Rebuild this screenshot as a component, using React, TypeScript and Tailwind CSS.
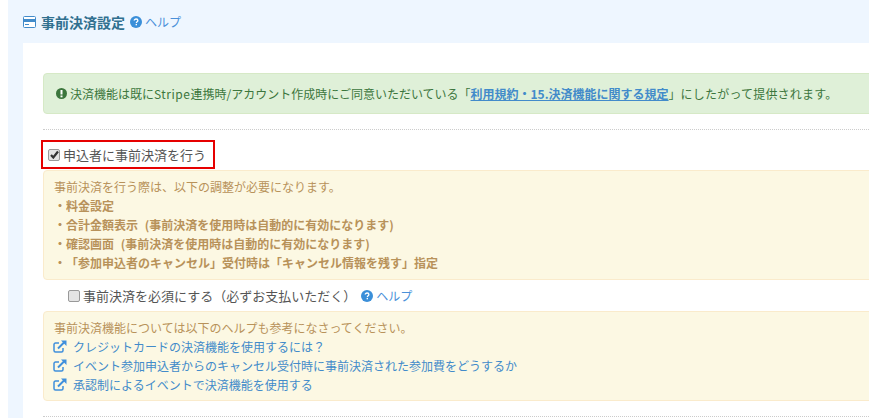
const font = "font-['Noto_Sans_CJK_JP','Noto_Sans_CJK_SC',sans-serif] [text-spacing-trim:space-all]";

function Help() {
  return (
    <span className="flex items-center gap-[3px] text-[12px] leading-[16px] text-[#428bca]">
      <svg width="12" height="12" viewBox="0 0 12 12" className="shrink-0">
        <circle cx="6" cy="6" r="6" fill="#3b8fd9" />
        <path d="M4.200 4.600c0-1 .8-1.600 1.900-1.600s1.800.6 1.800 1.500c0 1.300-1.500 1.200-1.500 2.400" fill="none" stroke="#fff" strokeWidth="1.300" />
        <rect x="5.600" y="7.900" width="1.400" height="1.400" fill="#fff" />
      </svg>
      <span className="text-[#4a90d9]">ヘルプ</span>
    </span>
  );
}

function Ext() {
  return (
    <svg width="14" height="13" viewBox="0 0 14 13" className="shrink-0" fill="none" stroke="#3f8fdc">
      <path d="M10 8v2.500a1.500 1.500 0 0 1-1.500 1.500H2.500A1.500 1.500 0 0 1 1 10.500V4.500A1.500 1.500 0 0 1 2.500 3H6" strokeWidth="1.500" />
      <path d="M5 8.500 11 2.500" strokeWidth="2" />
      <path d="M8 0.500h5.500v5.500z" fill="#3f8fdc" stroke="none" />
    </svg>
  );
}

function Link({ children }: { children: string }) {
  return (
    <div className="flex items-center gap-[6px] -ml-px h-[19px] text-[12px] text-[#428bca]">
      <Ext />
      <span>{children}</span>
    </div>
  );
}

function Box({ checked, size }: { checked?: boolean; size: string }) {
  return (
    <span className={`${size} rounded-[2px] border border-[#999999] bg-[#e4e4e4] flex items-center justify-center shrink-0`}>
      {checked && (
        <svg width="9" height="9" viewBox="0 0 9 9">
          <path d="M1 5l2.300 2.500L8 1.500" fill="none" stroke="#333" strokeWidth="2.200" />
        </svg>
      )}
    </span>
  );
}

export default function App() {
  return (
    <div className={`${font} w-[869px] h-[418px] overflow-hidden bg-white pl-2`}>
      <div className="h-[418px] bg-[#eef6ff] pl-[15px]">
        <div className="h-[43px] flex items-center pt-[1px]">
          <svg width="13" height="12" viewBox="0 0 13 12" className="mr-[5px] shrink-0">
            <rect x="0.500" y="0.500" width="12" height="11" rx="1" fill="#fff" stroke="#428bca" />
            <rect x="0" y="3" width="13" height="3" fill="#428bca" />
            <rect x="2" y="8" width="4" height="1" fill="#428bca" />
          </svg>
          <span className="text-[14px] font-bold text-[#31708f] mr-[5px]">事前決済設定</span>
          <Help />
        </div>
        <div className="h-[375px] bg-white pl-5 pt-[30px]">
          <div className="w-[900px] h-[41px] flex items-center gap-[3px] pl-[12px] bg-[#dff0d8] border border-[#d6e9c6] rounded-l-[4px] text-[12px] text-[#3c763d]">
            <svg width="11" height="11" viewBox="0 0 11 11" className="shrink-0">
              <circle cx="5.500" cy="5.500" r="5.500" fill="#3c763d" />
              <rect x="4.500" y="2" width="2" height="4.500" fill="#fff" />
              <rect x="4.500" y="7.500" width="2" height="1.800" fill="#fff" />
            </svg>
            <span>
              決済機能は既に<span className="tracking-[0.5px]">Stripe</span>連携時/アカウント作成時にご同意いただいている「
              <span className="font-bold text-[#428bca] underline">利用規約・15.決済機能に関する規定</span>
              」<span className="tracking-[0.2px]">にしたがって提供されます。</span>
            </span>
          </div>
          <div className="mt-[15px] h-0 border-t border-dotted border-[#cccccc]" />
          <div className="-ml-[2px] mt-[10px] w-[174px] h-[29px] border-2 border-[#e60000] flex items-center gap-[3px] pl-[5px] text-[13px] text-[#555555]">
            <Box checked size="w-[12px] h-[12px]" />
            <span>申込者に事前決済を行う</span>
          </div>
          <div className="mt-[1px] w-[900px] h-[110px] bg-[#fcf8e3] border border-[#faebcc] rounded-l-[4px] pl-[10px] pt-[6px] text-[12px] leading-[19px] text-[#b8925a]">
            <div>事前決済を行う際は、以下の調整が必要になります。</div>
            <div className="font-bold">・料金設定</div>
            <div className="font-bold [word-spacing:4px]">・合計金額表示 (事前決済を使用時は自動的に有効になります)</div>
            <div className="font-bold [word-spacing:4px]">・確認画面 (事前決済を使用時は自動的に有効になります)</div>
            <div className="font-bold">・「参加申込者のキャンセル」受付時は「キャンセル情報を残す」指定</div>
          </div>
          <div className="h-[31px] flex items-center pl-[25px] text-[13px] text-[#555555]">
            <Box size="w-[12px] h-[12px]" />
            <span className="ml-[3px] mr-[5px]">事前決済を必須にする（必ずお支払いただく）</span>
            <Help />
          </div>
          <div className="w-[900px] h-[90px] bg-[#fcf8e3] border border-[#faebcc] rounded-l-[4px] pl-[10px] pt-[6px] text-[12px] text-[#b8925a]">
            <div className="h-[19px] leading-[19px]">事前決済機能については以下のヘルプも参考になさってください。</div>
            <Link>クレジットカードの決済機能を使用するには？</Link>
            <Link>イベント参加申込者からのキャンセル受付時に事前決済された参加費をどうするか</Link>
            <Link>承認制によるイベントで決済機能を使用する</Link>
          </div>
          <div className="mt-[15px] h-0 border-t border-dotted border-[#cccccc]" />
        </div>
      </div>
    </div>
  );
}
